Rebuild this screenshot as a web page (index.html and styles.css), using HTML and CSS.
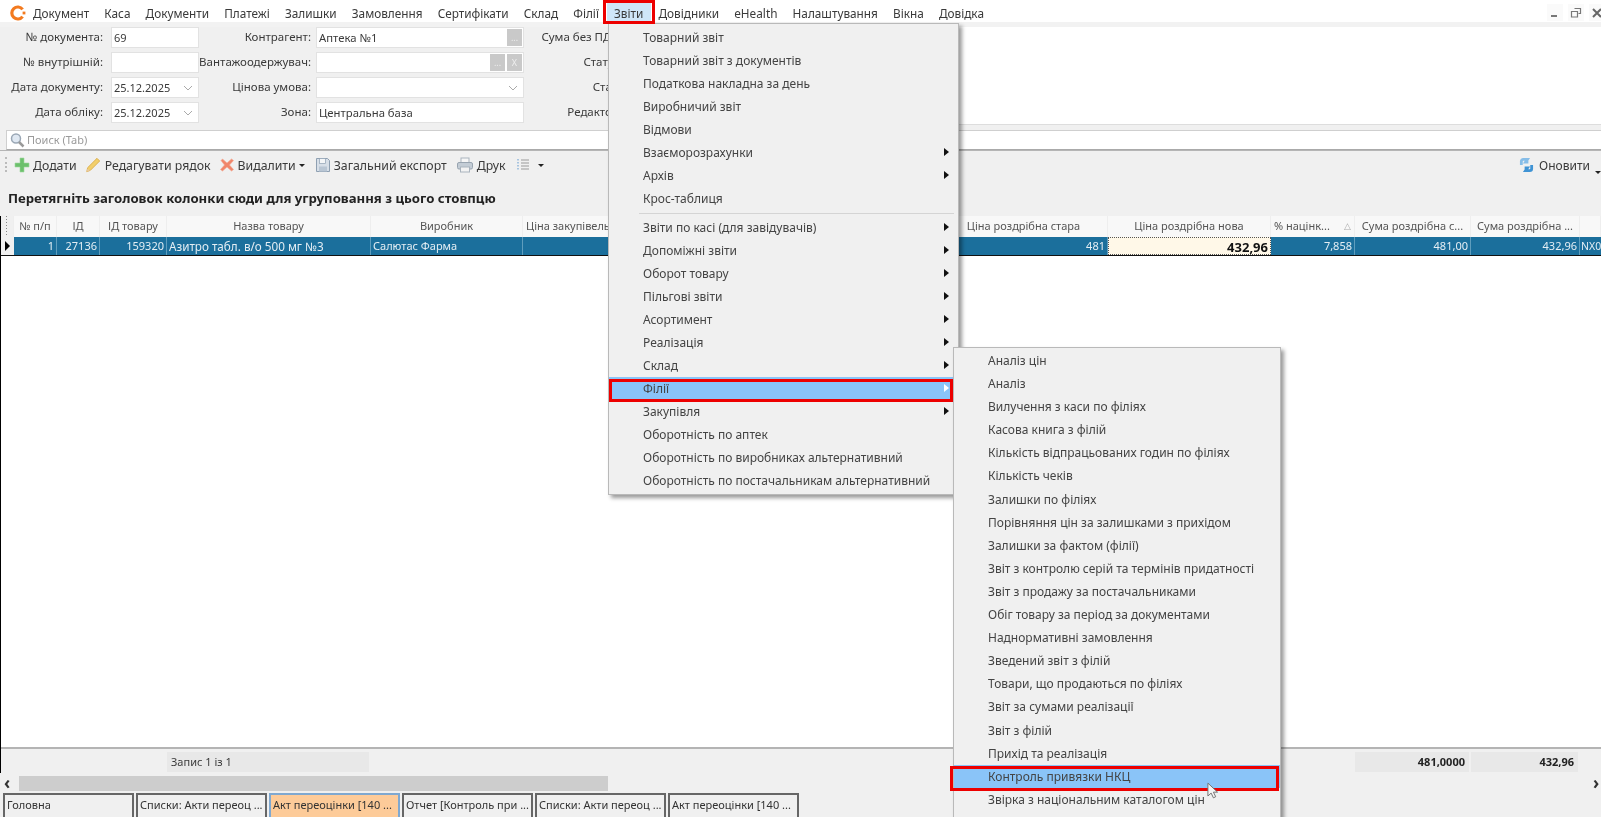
FILE: index.html
```html
<!DOCTYPE html>
<html lang="uk">
<head>
<meta charset="utf-8">
<title>Акт переоцінки</title>
<link rel="stylesheet" href="styles.css">
</head>
<body>
<div class="app">
  <nav class="menubar">
    <svg class="logo" viewBox="0 0 16 16"><path d="M12.6 4.4A6 6 0 1 0 12.6 11.6" fill="none" stroke="#f37a1f" stroke-width="3.2"/><rect x="12.6" y="6.6" width="2.8" height="2.8" fill="#f37a1f"/></svg>
    <span class="mi">Документ</span>
    <span class="mi">Каса</span>
    <span class="mi">Документи</span>
    <span class="mi">Платежі</span>
    <span class="mi">Залишки</span>
    <span class="mi">Замовлення</span>
    <span class="mi">Сертифікати</span>
    <span class="mi">Склад</span>
    <span class="mi">Філії</span>
    <span class="mi mi-active">Звіти</span>
    <span class="mi">Довідники</span>
    <span class="mi">eHealth</span>
    <span class="mi">Налаштування</span>
    <span class="mi">Вікна</span>
    <span class="mi">Довідка</span>
    <div class="winctl">
      <span class="wbtn"><svg viewBox="0 0 12 12" width="12" height="12"><rect x="2" y="8" width="6" height="2" fill="#777"/></svg></span>
      <span class="wbtn"><svg viewBox="0 0 12 12" width="12" height="12"><path d="M4.5 1.5h6v5h-2M1.5 4.5h6v5.500h-6z" fill="none" stroke="#777" stroke-width="1.200"/></svg></span>
      <span class="wbtn"><svg viewBox="0 0 12 12" width="12" height="12"><path d="M2 2l8 8M10 2l-8 8" stroke="#666" stroke-width="2"/></svg></span>
    </div>
  </nav>

  <section class="form">
    <div class="form-left">
      <label class="lb">№ документа:</label>
      <div class="inp inp-s">69</div>
      <label class="lb lb-n">Контрагент:</label>
      <div class="inp inp-l">Аптека №1<span class="ibtns"><span class="ib">...</span></span></div>
      <label class="lb lb-n">Сума без ПДВ:</label>

      <label class="lb">№ внутрішній:</label>
      <div class="inp inp-s"></div>
      <label class="lb lb-n">Вантажоодержувач:</label>
      <div class="inp inp-l"><span class="ibtns"><span class="ib">...</span><span class="ib">X</span></span></div>
      <label class="lb lb-n">Статус:</label>

      <label class="lb">Дата документу:</label>
      <div class="inp inp-s">25.12.2025<svg class="chev" viewBox="0 0 10 6"><path d="M1 1l4 4 4-4" fill="none" stroke="#aaa"/></svg></div>
      <label class="lb lb-n">Цінова умова:</label>
      <div class="inp inp-l"><svg class="chev" viewBox="0 0 10 6"><path d="M1 1l4 4 4-4" fill="none" stroke="#aaa"/></svg></div>
      <label class="lb lb-n">Стан:</label>

      <label class="lb">Дата обліку:</label>
      <div class="inp inp-s">25.12.2025<svg class="chev" viewBox="0 0 10 6"><path d="M1 1l4 4 4-4" fill="none" stroke="#aaa"/></svg></div>
      <label class="lb lb-n">Зона:</label>
      <div class="inp inp-l">Центральна база</div>
      <label class="lb lb-n">Редактор:</label>
    </div>
    <div class="form-right"></div>
  </section>

  <div class="search">
    <svg class="sicon" viewBox="0 0 16 16"><circle cx="7" cy="6.500" r="4.500" fill="#dfe8f2" stroke="#9aa7b5" stroke-width="1.500"/><path d="M10 10l4.500 4.500" stroke="#9a9a9a" stroke-width="2.500"/></svg>
    <span class="sph">Поиск (Tab)</span>
  </div>

  <div class="toolbar">
    <span class="grip"></span>
    <button class="tb">
      <svg class="ic" viewBox="0 0 16 16"><path d="M6 1h4v5h5v4h-5v5H6v-5H1V6h5z" fill="#6cc06c" stroke="#9fd79f" stroke-width=".6"/></svg>Додати
    </button>
    <button class="tb">
      <svg class="ic ic-w" viewBox="0 0 18 18"><path d="M13.500 1.500l3 3L6 15l-4 1.500L3 12z" fill="#f2cf6b" stroke="#d9aa45"/><path d="M2.800 13l-.8 3.500 3.500-1z" fill="#e9c9a0"/></svg>Редагувати рядок
    </button>
    <button class="tb tb-del">
      <svg class="ic" viewBox="0 0 16 16"><path d="M2 3.500L3.500 2 8 6l4.500-4L14.500 3.500 10.500 8l4 4.500-2 1.500L8 10l-4.500 4-2-1.500L5.500 8z" fill="#f0856a" stroke="#f4a68f" stroke-width=".6"/></svg>Видалити<i class="caret"></i>
    </button>
    <button class="tb tb-exp">
      <svg class="ic" viewBox="0 0 16 16"><path d="M1.500 1.500h11l2 2v11h-13z" fill="#d7dfe8" stroke="#8fa0b2"/><rect x="4.500" y="1.500" width="6" height="5" fill="#f4f6f8" stroke="#8fa0b2" stroke-width=".7"/><rect x="4" y="9.500" width="8" height="5" fill="#b9c6d4"/></svg>Загальний експорт
    </button>
    <button class="tb tb-print">
      <svg class="ic ic-w" viewBox="0 0 18 16"><rect x="5" y="1" width="8" height="5" fill="#f6f6f6" stroke="#a9b3bd"/><rect x="1.500" y="5.500" width="15" height="6.500" rx="1.500" fill="#c3ccd5" stroke="#98a4b0"/><rect x="4.500" y="10" width="9" height="5" fill="#f3f3f3" stroke="#a9b3bd"/></svg>Друк
    </button>
    <button class="tb tb-list">
      <svg class="ic" viewBox="0 0 16 16"><path d="M6 3h8M6 6h8M6 9h8M6 12h8" stroke="#9a9a9a"/><path d="M3 2v11" stroke="#8fb5d9" stroke-width="1.500" stroke-dasharray="1.500 1.500"/></svg><i class="caret caret-far"></i>
    </button>
    <button class="tb tb-refresh">
      <svg class="ic ic-r" viewBox="0 0 16 16"><path d="M2.500 8V4A2 2 0 0 1 4.500 2H9L7 5h3" fill="none" stroke="#86bde8" stroke-width="3"/><path d="M13.500 8v4a2 2 0 0 1-2 2H7l2-3H6" fill="none" stroke="#3f93d4" stroke-width="3"/></svg>Оновити
    </button>
    <i class="caret caret-end"></i>
  </div>

  <div class="grouphint">Перетягніть заголовок колонки сюди для угруповання з цього стовпцю</div>

  <div class="grid-wrap">
    <div class="grow ghead">
      <div class="gc gc-grip"></div>
      <div class="gc">№ п/п</div>
      <div class="gc">ІД</div>
      <div class="gc">ІД товару</div>
      <div class="gc">Назва товару</div>
      <div class="gc">Виробник</div>
      <div class="gc gc-l">Ціна закупівельна</div>
      <div class="gc">Ціна роздрібна стара</div>
      <div class="gc">Ціна роздрібна нова</div>
      <div class="gc gc-sort">% націнк...<span class="sort">△</span></div>
      <div class="gc">Сума роздрібна с...</div>
      <div class="gc">Сума роздрібна ...</div>
      <div class="gc"></div>
    </div>
    <div class="grow gdata">
      <div class="gc gc-ind"><i class="ind"></i></div>
      <div class="gc gc-r">1</div>
      <div class="gc gc-r">27136</div>
      <div class="gc gc-r">159320</div>
      <div class="gc gc-l gc-name">Азитро табл. в/о 500 мг №3</div>
      <div class="gc gc-l">Салютас Фарма</div>
      <div class="gc"></div>
      <div class="gc gc-r">481</div>
      <div class="gc gc-r gc-edit">432,96</div>
      <div class="gc gc-r">7,858</div>
      <div class="gc gc-r">481,00</div>
      <div class="gc gc-r">432,96</div>
      <div class="gc gc-l gc-clip">NX0</div>
    </div>
    <div class="gbody"></div>
    <div class="grow gfoot">
      <div class="gc"></div>
      <div class="gc"></div>
      <div class="gc"></div>
      <div class="gc"></div>
      <div class="gc gc-l gf">Запис 1 із 1</div>
      <div class="gc"></div>
      <div class="gc"></div>
      <div class="gc"></div>
      <div class="gc"></div>
      <div class="gc"></div>
      <div class="gc gc-r gf gfb">481,0000</div>
      <div class="gc gc-r gf gfb">432,96</div>
      <div class="gc"></div>
    </div>
  </div>

  <div class="hscroll">
    <span class="arr">‹</span>
    <div class="thumb"></div>
    <span class="arr arr-r">›</span>
  </div>

  <div class="tabs">
    <div class="tab">Головна</div>
    <div class="tab">Списки: Акти переоц ...</div>
    <div class="tab tab-on">Акт переоцінки [140 ...</div>
    <div class="tab">Отчет [Контроль при ...</div>
    <div class="tab">Списки: Акти переоц ...</div>
    <div class="tab">Акт переоцінки [140 ...</div>
  </div>
</div>

<div class="menu menu-main">
  <div class="it">Товарний звіт</div>
  <div class="it">Товарний звіт з документів</div>
  <div class="it">Податкова накладна за день</div>
  <div class="it">Виробничий звіт</div>
  <div class="it">Відмови</div>
  <div class="it has">Взаєморозрахунки</div>
  <div class="it has">Архів</div>
  <div class="it">Крос-таблиця</div>
  <div class="sep"></div>
  <div class="it has">Звіти по касі (для завідувачів)</div>
  <div class="it has">Допоміжні звіти</div>
  <div class="it has">Оборот товару</div>
  <div class="it has">Пільгові звіти</div>
  <div class="it has">Асортимент</div>
  <div class="it has">Реалізація</div>
  <div class="it has">Склад</div>
  <div class="it has it-hl">Філії</div>
  <div class="it has">Закупівля</div>
  <div class="it">Оборотність по аптек</div>
  <div class="it">Оборотність по виробниках альтернативний</div>
  <div class="it">Оборотність по постачальникам альтернативний</div>
</div>

<div class="menu menu-sub">
  <div class="it">Аналіз цін</div>
  <div class="it">Аналіз</div>
  <div class="it">Вилучення з каси по філіях</div>
  <div class="it">Касова книга з філій</div>
  <div class="it">Кількість відпрацьованих годин по філіях</div>
  <div class="it">Кількість чеків</div>
  <div class="it">Залишки по філіях</div>
  <div class="it">Порівняння цін за залишками з прихідом</div>
  <div class="it">Залишки за фактом (філії)</div>
  <div class="it">Звіт з контролю серій та термінів придатності</div>
  <div class="it">Звіт з продажу за постачальниками</div>
  <div class="it">Обіг товару за період за документами</div>
  <div class="it">Наднормативні замовлення</div>
  <div class="it">Зведений звіт з філій</div>
  <div class="it">Товари, що продаються по філіях</div>
  <div class="it">Звіт за сумами реалізації</div>
  <div class="it">Звіт з філій</div>
  <div class="it">Прихід та реалізація</div>
  <div class="it it-hl">Контроль привязки НКЦ</div>
  <div class="it">Звірка з національним каталогом цін</div>
</div>

<div class="mark mark-top"></div>
<div class="mark mark-fil"></div>
<div class="mark mark-nkc"></div>

<svg class="cursor" viewBox="0 0 12 18"><path d="M1 1v14l3.500-3.200L7 17l2.500-1.200-2.500-5h4.500z" fill="#f4f4f4" stroke="#6b6b6b"/></svg>
</body>
</html>
```

FILE: styles.css
```css
* { box-sizing: border-box; }
html, body { margin: 0; height: 100%; overflow: hidden; }
body {
  font-family: "Noto Sans", "Liberation Sans", sans-serif;
  font-size: 11px;
  color: #3a3a3a;
  background: #fff;
  position: relative;
  filter: blur(0.45px);
}
.app { height: 817px; display: flex; flex-direction: column; background: #f0f0f0; overflow: hidden; }

/* menu bar */
.menubar { height: 27px; flex: none; display: flex; align-items: flex-start; background: linear-gradient(#fff 0 22px, #f2f2f2 22px); padding-left: 10px; font-size: 11.8px; }
.logo { width: 16px; height: 16px; margin: 5px 0 0; flex: none; }
.mi { height: 23px; line-height: 26px; padding: 0 7.56px; white-space: nowrap; }
.mi:first-of-type { padding-left: 7px; }
.mi-active { background: #cfe6f8; }
.winctl { margin-left: auto; margin-right: -4px; display: flex; gap: 5px; padding-top: 4px; }
.wbtn { width: 16px; height: 17px; background: #fafafa; display: flex; align-items: center; justify-content: center; }

/* form */
.form { height: 98px; flex: none; display: flex; }
.form-left { width: 700px; flex: none; display: grid; grid-template-columns: 111px 88px 112px 213px 98px; row-gap: 4px; grid-auto-rows: 21px; align-items: center; }
.lb { text-align: right; white-space: nowrap; padding-right: 8px; justify-self: end; font-size: 11.5px; line-height: 19px; height: 21px; }
.lb-n { padding-right: 0; }
.inp { height: 21px; line-height: 19px; background: #fff; border: 1px solid #e2e2e2; padding: 0 2px; position: relative; font-size: 11.3px; }
.inp-s { font-size: 11px; }
.inp-l { margin-left: 5px; width: 208px; }
.ibtns { position: absolute; right: 1px; top: 1px; bottom: 1px; display: flex; gap: 2px; }
.ib { width: 15px; background: #c9c9c9; color: #eee; font-size: 9px; text-align: center; line-height: 17px; }
.chev { position: absolute; right: 5px; top: 7px; width: 10px; height: 6px; }
.form-right { flex: 1; background: #fff; border-bottom: 1px solid #ddd; }

/* search */
.search { height: 20px; flex: none; margin: 5px 0 0 6px; background: #fff; border: 1px solid #cfcfcf; border-right: 0; border-bottom-color: #aaa; display: flex; align-items: center; }
.sicon { width: 16px; height: 16px; margin-left: 2px; flex: none; }
.sph { color: #9a9a9a; margin-left: 2px; line-height: 16px; }

/* toolbar */
.toolbar { height: 32px; flex: none; display: flex; align-items: flex-start; padding-top: 4px; position: relative; border-top: 1px solid #b5b5b5; font-size: 12.3px; }
.grip { width: 2px; height: 15px; margin: 2px 0 0 5px; border-left: 2px dotted #bbb; flex: none; }
.tb { border: 0; background: none; font: inherit; color: inherit; padding: 0; height: 20px; display: flex; align-items: center; white-space: nowrap; margin-left: 7px; }
.ic { width: 16px; height: 16px; margin-right: 3px; flex: none; }
.ic-w { width: 18px; }
.ic-r { width: 15px; margin-right: 5px; }
.tb-del { margin-left: 8px; }
.tb-exp { margin-left: 10px; }
.tb-print { margin-left: 9px; }
.tb-list { margin-left: 9px; }
.tb-refresh { margin-left: auto; margin-right: 11px; font-size: 12px; }
.caret { width: 0; height: 0; border: 3px solid transparent; border-top: 3px solid #222; border-bottom: 0; margin-left: 3px; }
.caret-far { margin-left: 4px; }
.caret-end { position: absolute; right: 0; top: 20px; margin: 0; }

.grouphint { height: 34px; flex: none; font-weight: 700; font-size: 13.2px; color: #222; padding: 7px 0 0 8px; line-height: 18px; white-space: nowrap; }

/* grid */
.grid-wrap { flex: 1; display: flex; flex-direction: column; border-left: 1px solid #000; min-height: 0; }
.grow { display: grid; grid-template-columns: 13px 43px 43px 67px 204px 152px 417px 168px 163px 84px 116px 109px 21px; flex: none; }
.ghead { height: 21px; background: #f0f0f0; }
.ghead .gc { background: #f8f8f8; border-right: 1px solid #eee; text-align: center; line-height: 20px; white-space: nowrap; overflow: hidden; color: #555; }
.ghead .gc-grip { background: radial-gradient(#888 40%, transparent 45%) 4px 5px / 3px 3px repeat-y #f0f0f0; }
.ghead .gc-l { text-align: left; padding-left: 3px; }
.ghead .gc-sort { text-align: left; padding-left: 3px; position: relative; }
.sort { position: absolute; right: 3px; color: #aaa; font-size: 9px; }
.gdata { height: 19px; background: #1b6f9c; color: #e4eef4; border-bottom: 1px solid #111; }
.gdata .gc { line-height: 18px; border-right: 1px solid #5f9dbd; padding: 0 2px; white-space: nowrap; overflow: hidden; }
.gdata .gc-ind { background: #f0f0f0; border-right: 0; padding: 0; position: relative; }
.ind { position: absolute; left: 4px; top: 4px; border: 5px solid transparent; border-left: 5px solid #000; border-right: 0; }
.gc-r { text-align: right; }
.gc-l { text-align: left; }
.gdata .gc-name { font-size: 11.7px; }
.gdata .gc-edit { background: #fff8e8; color: #111; font-weight: 700; font-size: 13px; border: 1px dotted #555; }
.gdata .gc-clip { padding: 0 0 0 1px; border-right: 0; font-size: 10.5px; }
.gbody { flex: 1; background: #fff; border-bottom: 2px solid #b4b4b4; }
.gfoot { height: 24px; padding-top: 3px; }
.gfoot .gc { height: 20px; line-height: 20px; }
.gf { background: #e8e8e8; padding: 0 4px; margin-right: 2px; }
.gfb { font-weight: 700; color: #222; }

/* horizontal scrollbar */
.hscroll { height: 20px; flex: none; display: flex; align-items: center; padding: 0 0 0 4px; }
.arr { font-size: 17px; line-height: 16px; width: 15px; color: #333; font-weight: 700; }
.thumb { width: 589px; height: 15px; background: #cdcdcd; }
.arr-r { margin-left: auto; width: 8px; }

/* tabs */
.tabs { height: 24px; flex: none; display: flex; gap: 2px; padding-left: 3px; }
.tab { width: 131px; height: 26px; border: 2px solid #666; background: #f0f0f0; line-height: 20px; padding-left: 2px; white-space: nowrap; overflow: hidden; color: #333; }
.tab-on { background: #fdcb99; border-color: #7fa8d0; }

/* popup menus */
.menu { position: absolute; background: #f0f0f0; border: 1px solid #b9b9b9; box-shadow: 3px 3px 4px rgba(0,0,0,.4); color: #444; font-size: 12px; }
.menu-main { left: 608px; top: 23px; width: 351px; height: 472px; padding-top: 1.5px; z-index: 2; }
.menu-sub { left: 953px; top: 347px; width: 328px; height: 480px; padding-top: 1px; z-index: 3; }
.it { height: 23px; line-height: 23px; padding-left: 34px; position: relative; white-space: nowrap; }
.menu-sub .it { height: 23.1px; }
.it.has::after { content: ""; position: absolute; right: 9px; top: 7px; border: 4px solid transparent; border-left: 5px solid #111; border-right: 0; }
.it-hl { background: #8ac4f8; }
.it-hl.has::after { border-left-color: #fff; }
.sep { height: 6.500px; margin-left: 30px; position: relative; }
.sep::after { content: ""; position: absolute; left: 0; right: 4px; top: 3px; border-top: 1px solid #d4d4d4; }

/* annotation frames */
.mark { position: absolute; border: 3px solid #ed0000; z-index: 4; }
.mark-top { left: 603px; top: 0; width: 52px; height: 24px; }
.mark-fil { left: 609px; top: 379px; width: 344px; height: 23px; z-index: 2; }
.mark-nkc { left: 950px; top: 766px; width: 329px; height: 25px; }
.cursor { position: absolute; left: 1207px; top: 782px; width: 11px; height: 17px; z-index: 5; }
```
